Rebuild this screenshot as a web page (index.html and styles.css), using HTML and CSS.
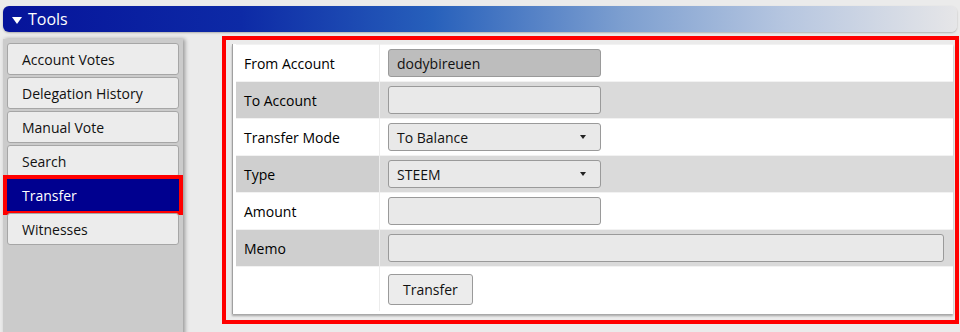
FILE: index.html
```html
<!DOCTYPE html>
<html lang="en">
<head>
    <meta charset="UTF-8">
    <title>Tools - Transfer</title>
    <link rel="stylesheet" href="styles.css">
</head>
<body>
    <div class="header">
        <span class="arrow"></span>
        Tools
    </div>

    <div class="layout">
        <!-- Tool menu -->
        <div class="sidebar">
            <button class="tab">Account Votes</button>
            <button class="tab">Delegation History</button>
            <button class="tab">Manual Vote</button>
            <button class="tab">Search</button>
            <button class="tab active">Transfer</button>
            <button class="tab">Witnesses</button>
        </div>

        <!-- Transfer form -->
        <div class="content">
            <div class="panel">
                <table class="form">
                    <tr>
                        <td class="label">From Account</td>
                        <td class="value"><input class="field disabled" type="text" value="dodybireuen" disabled></td>
                    </tr>
                    <tr class="alt">
                        <td class="label">To Account</td>
                        <td class="value"><input class="field" type="text"></td>
                    </tr>
                    <tr>
                        <td class="label">Transfer Mode</td>
                        <td class="value"><div class="field select">To Balance<span class="caret"></span></div></td>
                    </tr>
                    <tr class="alt">
                        <td class="label">Type</td>
                        <td class="value"><div class="field select">STEEM<span class="caret"></span></div></td>
                    </tr>
                    <tr>
                        <td class="label">Amount</td>
                        <td class="value"><input class="field" type="text"></td>
                    </tr>
                    <tr class="alt">
                        <td class="label">Memo</td>
                        <td class="value"><input class="field wide" type="text"></td>
                    </tr>
                    <tr class="last">
                        <td class="label"></td>
                        <td class="value"><button class="submit">Transfer</button></td>
                    </tr>
                </table>
            </div>
        </div>
    </div>
</body>
</html>
```

FILE: styles.css
```css
body {
    margin: 0;
    font-family: "Open Sans", "Noto Sans", sans-serif;
    font-size: 14px;
    background-color: #ebebeb;
    color: #000;
    height: 332px;
    overflow: hidden;
}

.header {
    display: flex;
    align-items: center;
    gap: 6px;
    margin: 6px 3px 0 3px;
    height: 26px;
    padding-left: 9px;
    border-radius: 6px;
    color: #fff;
    font-size: 16px;
    background: linear-gradient(to right, #06139a 0%, #0d2aa6 25%, #2760bb 45%, #7d9fd0 65%, #b6c6e0 82%, #e6e6e8 100%);
    box-shadow: 0 1px 2px rgba(0, 0, 0, 0.25);
}

.arrow {
    width: 0;
    height: 0;
    border-left: 5px solid transparent;
    border-right: 5px solid transparent;
    border-top: 7px solid #fff;
    margin-top: 2px;
}

.layout {
    display: flex;
    align-items: flex-start;
    gap: 39px;
    margin-left: 3px;
}

.sidebar {
    display: flex;
    flex-direction: column;
    gap: 2px;
    width: 172px;
    height: 300px;
    margin-top: 7px;
    padding: 4px;
    background-color: #cbcbcb;
    box-shadow: 2px 0 4px rgba(0, 0, 0, 0.35);
}

.tab {
    height: 32px;
    padding: 0 0 0 14px;
    text-align: left;
    font-family: inherit;
    font-size: 14px;
    color: #111;
    background-color: #ececec;
    border: 1px solid #a6a6a6;
    border-radius: 3px;
}

.tab.active {
    background-color: #00008f;
    color: #fff;
    border-color: #00008f;
    border-radius: 0;
    outline: 4px solid #f00;
}

.content {
    width: 729px;
    height: 280px;
    margin-top: 4px;
    border: 4px solid #f00;
    background-color: #ebebeb;
}

.panel {
    margin: 4px 2px 0 6px;
    height: 270px;
    padding-left: 3px;
    background-color: #fff;
    border-left: 1px solid #a0a0a0;
    box-shadow: 0 2px 2px rgba(0, 0, 0, 0.3);
}

.form {
    width: 100%;
    border-collapse: collapse;
}

.form td {
    height: 36px;
    padding: 0;
    border-top: 1px solid #f2f2f2;
}

.form tr.last td {
    height: 44px;
}

.label {
    width: 135px;
    padding-left: 8px !important;
    border-right: 1px solid #ececec;
}

.value {
    padding-left: 8px !important;
}

.alt .label {
    background-color: #cfcfcf;
}

.alt .value {
    background-color: #dadada;
}

.field {
    box-sizing: border-box;
    display: flex;
    align-items: center;
    width: 213px;
    height: 28px;
    padding: 0 8px;
    font-family: inherit;
    font-size: 14px;
    color: #111;
    background-color: #e9e9e9;
    border: 1px solid #9a9a9a;
    border-radius: 3px;
}

.field.disabled {
    background-color: #bdbdbd;
}

.field.wide {
    width: 556px;
}

.select {
    justify-content: space-between;
}

.caret {
    width: 0;
    height: 0;
    border-left: 3px solid transparent;
    border-right: 3px solid transparent;
    border-top: 4px solid #222;
    margin-right: 6px;
}

.submit {
    height: 31px;
    padding: 0 14px;
    font-family: inherit;
    font-size: 14px;
    color: #111;
    background-color: #ececec;
    border: 1px solid #9a9a9a;
    border-radius: 3px;
}
```
